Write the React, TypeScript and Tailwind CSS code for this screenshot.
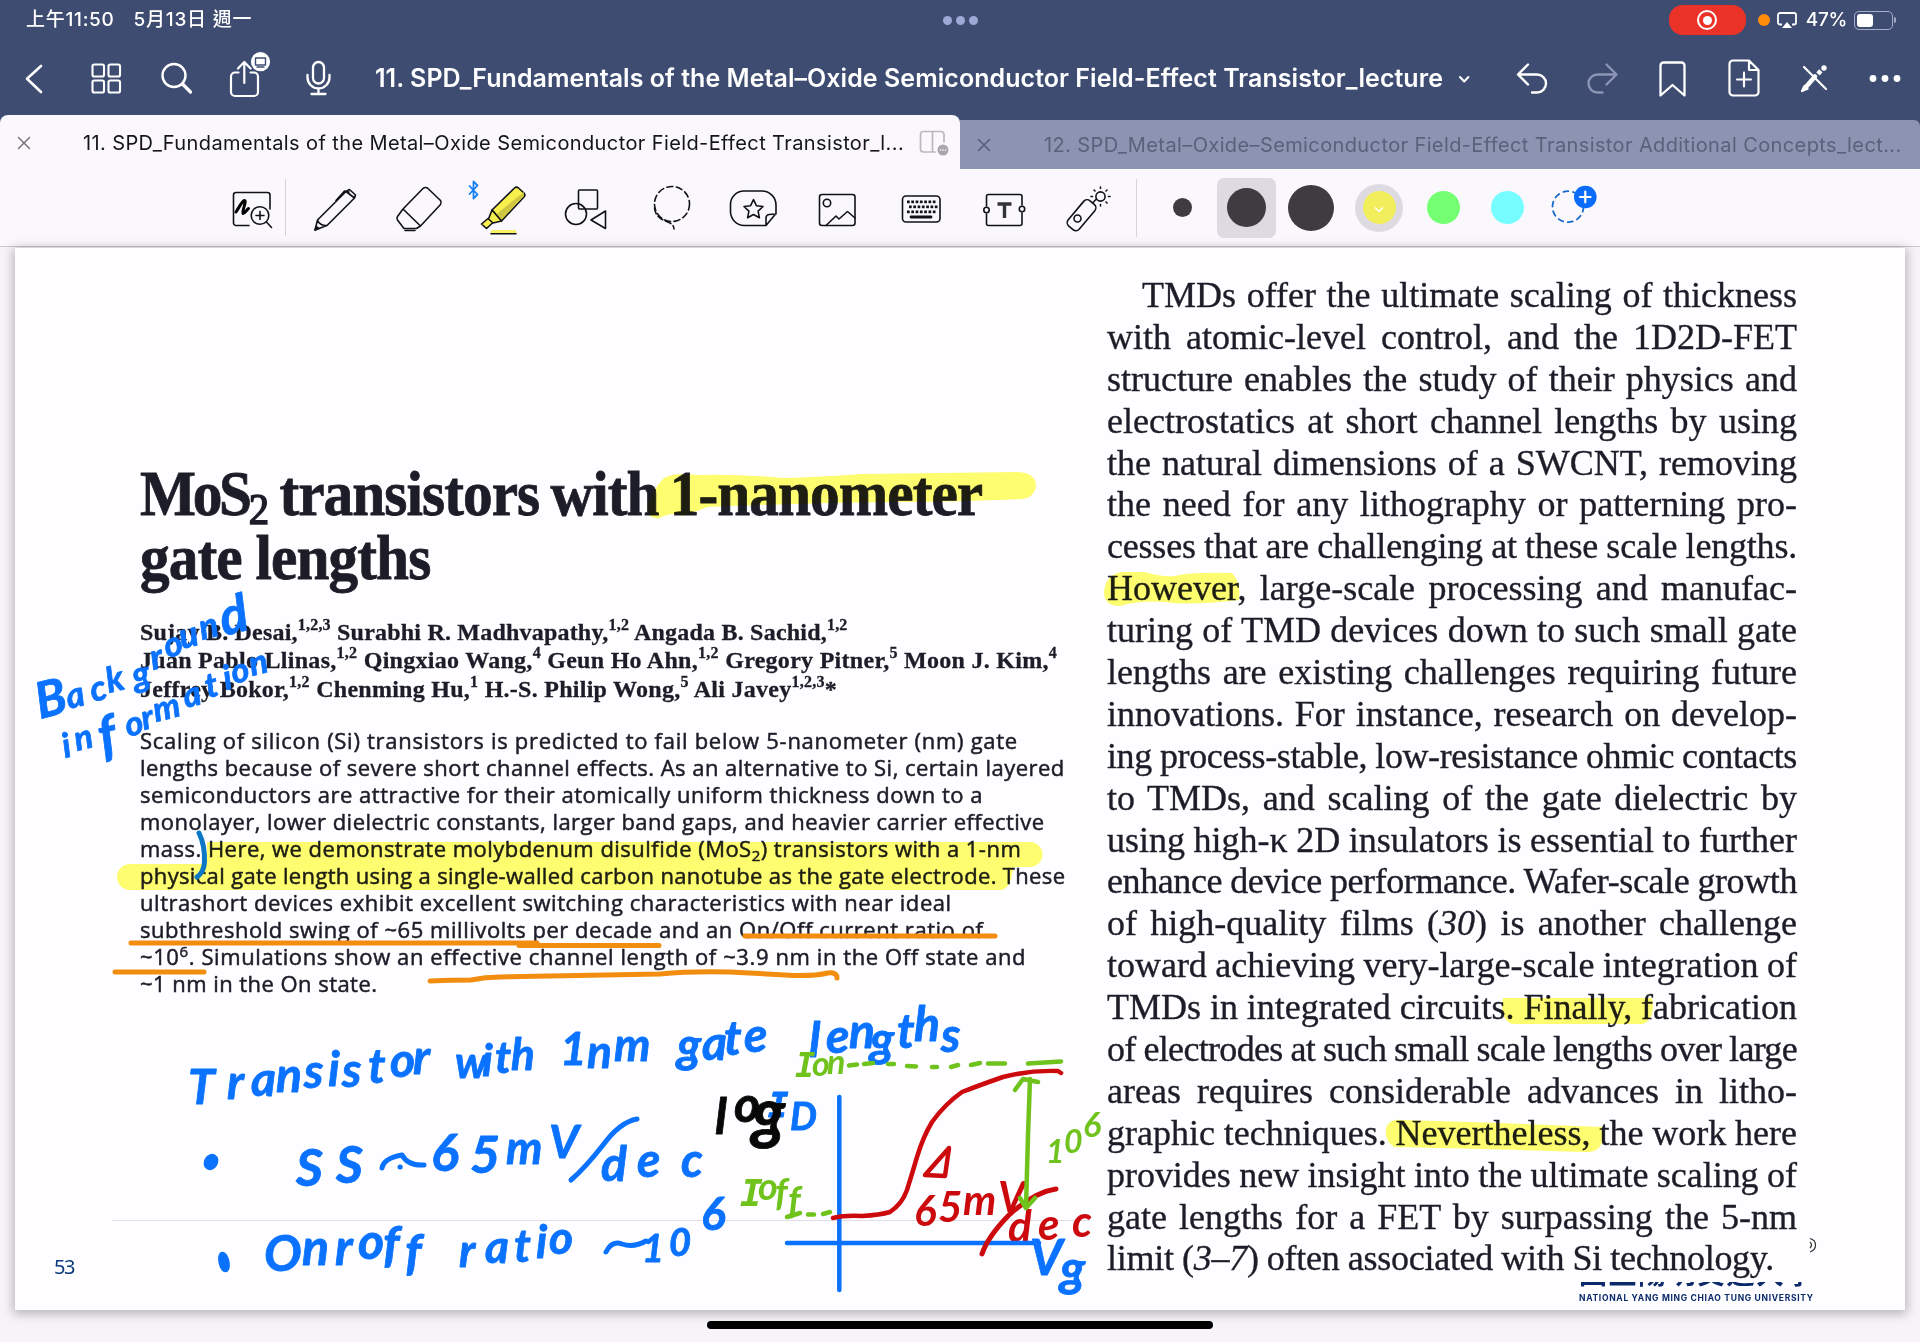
import { useLayoutEffect, useRef, useState, type ReactNode } from "react";

/** One line of text stretched to an exact width, by tracking or by horizontal scaling. */
function Fit({ w, scale = false, className = "", children }: { w: number; scale?: boolean; className?: string; children: ReactNode }) {
  const ref = useRef<HTMLSpanElement>(null);
  const [style, setStyle] = useState<{ letterSpacing?: string; transform?: string }>({});
  useLayoutEffect(() => {
    const el = ref.current;
    if (!el) return;
    const natural = el.offsetWidth;
    const n = (el.textContent ?? "").length;
    if (scale) setStyle({ transform: `scaleX(${w / natural})` });
    else setStyle({ letterSpacing: `${(w - natural) / n}px` });
  }, [w, scale]);
  return (
    <span ref={ref} style={style} className={`inline-block origin-left whitespace-nowrap ${className}`}>
      {children}
    </span>
  );
}

/** Justified line: word gaps take the slack, and tracking tightens a line that is too long. */
function Justified({ w, children }: { w: number; children: ReactNode }) {
  const ref = useRef<HTMLSpanElement>(null);
  const [style, setStyle] = useState<{ letterSpacing?: string; wordSpacing?: string }>({});
  useLayoutEffect(() => {
    const el = ref.current;
    if (!el) return;
    const text = el.textContent ?? "";
    const gaps = text.split(" ").length - 1;
    const slack = w - el.getBoundingClientRect().width;
    const word = Math.max(slack / gaps, -0.5);
    setStyle({ wordSpacing: `${word}px`, letterSpacing: `${(slack - word * gaps) / text.length}px` });
  }, [w]);
  return (
    <span ref={ref} style={style} className="inline-block whitespace-nowrap">
      {children}
    </span>
  );
}

/** Icon cell; its drawing uses window coordinates around the centre cx, cy. */
function Cell({ cx, cy, w, h, stroke = "#111118", sw = 1.6, children }: { cx: number; cy: number; w: number; h: number; stroke?: string; sw?: number; children: ReactNode }) {
  return (
    <svg className="block shrink-0" width={w} height={h} viewBox={`${cx - w / 2} ${cy - h / 2} ${w} ${h}`} fill="none" stroke={stroke} strokeWidth={sw} strokeLinecap="round" strokeLinejoin="round">
      {children}
    </svg>
  );
}

const W = "#ffffff";

function StatusBar() {
  return (
    <div className="grid h-[40px] grid-cols-3 items-center text-[19px] font-medium text-white">
      <div className="flex gap-[19px] pl-[26px]">
        <Fit w={89}>上午11:50</Fit>
        <Fit w={119}>5月13日 週一</Fit>
      </div>
      <div className="flex justify-center gap-[4px]">
        <i className="size-[9px] rounded-full bg-[#9fa9d6]" />
        <i className="size-[9px] rounded-full bg-[#9fa9d6]" />
        <i className="size-[9px] rounded-full bg-[#9fa9d6]" />
      </div>
      <div className="flex items-center justify-end pr-[24px]">
        <div className="flex h-[30px] w-[77px] items-center justify-center rounded-[14px] bg-[#ea3228]">
          <span className="flex size-[20px] items-center justify-center rounded-full border-2 border-white">
            <i className="size-[9px] rounded-full bg-white" />
          </span>
        </div>
        <i className="ml-[12px] size-[12px] rounded-full bg-[#ff8c0a]" />
        <svg className="ml-[7px]" width="20" height="17" viewBox="0 0 20 17" fill="none" stroke="white" strokeWidth="1.8">
          <path d="M5 12.500H3a2 2 0 0 1-2-2V3a2 2 0 0 1 2-2h14a2 2 0 0 1 2 2v7.500a2 2 0 0 1-2 2h-2" />
          <path d="M10 10l5 6H5z" fill="white" stroke="none" />
        </svg>
        <span className="ml-[9px]">
          <Fit w={41}>47%</Fit>
        </span>
        <div className="ml-[7px] flex h-[19px] w-[39px] items-center rounded-[5px] border-[1.500px] border-[#a5adca] pl-[1.500px]">
          <i className="h-[13px] w-[16px] rounded-[3px] bg-white" />
        </div>
        <i className="ml-[1px] h-[6px] w-[2px] rounded-r bg-[#a5adca]" />
      </div>
    </div>
  );
}

function NavBar() {
  return (
    <div className="flex h-[75px] items-center">
      <Cell cx={35} cy={77} w={70} h={60} stroke={W} sw={2.6}>
        <path d="M41 65L27 77.700L41 91" />
      </Cell>
      <Cell cx={105} cy={77} w={70} h={60} stroke={W} sw={2.1}>
        <rect x="92.500" y="63.500" width="11.500" height="12" rx="1.800" />
        <rect x="108.500" y="63.500" width="11.500" height="12" rx="1.800" />
        <rect x="92.500" y="79.500" width="11.500" height="12" rx="1.800" />
        <rect x="108.500" y="79.500" width="11.500" height="12" rx="1.800" />
      </Cell>
      <Cell cx={175} cy={77} w={70} h={60} stroke={W} sw={2.4}>
        <circle cx="174" cy="74.500" r="11.500" />
        <path d="M182.500 83L190.500 91" strokeWidth="3.200" />
      </Cell>
      <Cell cx={247} cy={77} w={74} h={60} stroke={W} sw={2.2}>
        <path d="M238.500 71.500H235a4 4 0 0 0-4 4V91a4 4 0 0 0 4 4h19a4 4 0 0 0 4-4V75.500a4 4 0 0 0-4-4h-3.500M244.300 82V61.500M238 67.500l6.300-6.500 6.300 6.500" />
        <circle cx="260.500" cy="60.700" r="9.600" fill={W} stroke="none" />
        <path d="M255.500 57h10v7h-10zM257 66h7" stroke="#3f4c72" strokeWidth="1.400" />
      </Cell>
      <Cell cx={318.500} cy={77} w={69} h={60} stroke={W} sw={2.3}>
        <rect x="313" y="61" width="11" height="21.500" rx="5.500" />
        <path d="M307.500 74v2.500a11 11 0 0 0 22 0V74M318.500 87.500v5M311.500 93h14" />
      </Cell>
      <h1 className="ml-[22px] w-[1068px] text-[25px] leading-[30px] font-semibold text-white">
        <Fit w={1068}>11. SPD_Fundamentals of the Metal–Oxide Semiconductor Field-Effect Transistor_lecture</Fit>
      </h1>
      <Cell cx={1464} cy={77} w={42} h={60} stroke={W} sw={2}>
        <path d="M1460 76l4.200 4.500 4.200-4.500" />
      </Cell>
      <span className="w-[12px]" />
      <Cell cx={1532} cy={77} w={70} h={60} stroke={W} sw={2.4}>
        <path d="M1528 63.500L1518 73.500l10 10M1518.500 73.500h18.500a9 9 0 0 1 0 18h-5" />
      </Cell>
      <Cell cx={1602} cy={77} w={70} h={60} stroke="#8c94b4" sw={2.4}>
        <path d="M1606.500 63.500l10 10-10 10M1616 73.500h-18.500a9 9 0 0 0 0 18h5" />
      </Cell>
      <Cell cx={1672} cy={77} w={70} h={60} stroke={W} sw={2.3}>
        <path d="M1660.500 94.500V64.500a3 3 0 0 1 3-3h18a3 3 0 0 1 3 3v30l-12-10.500z" />
      </Cell>
      <Cell cx={1743} cy={77} w={72} h={60} stroke={W} sw={2.200}>
        <path d="M1749 59.500h-16a3.500 3.500 0 0 0-3.500 3.500v28a3.500 3.500 0 0 0 3.500 3.500h22a3.500 3.500 0 0 0 3.500-3.500V69zM1749 59.500V69h9.500M1744 71.500v14M1737 78.500h14" />
      </Cell>
      <Cell cx={1814} cy={77} w={70} h={60} stroke={W} sw={2.2}>
        <path d="M1804 66l22 22" />
        <path d="M1805.500 86.500L1815 75.500" strokeWidth="4.500" />
        <path d="M1802 90l2.500-5 3 2.800z" fill={W} />
        <path d="M1818 73l2.800-3.200" strokeWidth="4.500" strokeLinecap="butt" />
        <circle cx="1824" cy="67" r="1.600" fill={W} />
      </Cell>
      <Cell cx={1884.500} cy={77} w={71} h={60} stroke="none">
        <circle cx="1873" cy="77.500" r="3.400" fill={W} />
        <circle cx="1885" cy="77.500" r="3.400" fill={W} />
        <circle cx="1897" cy="77.500" r="3.400" fill={W} />
      </Cell>
    </div>
  );
}

function Tabs() {
  return (
    <div className="flex h-[54px] items-end text-[20px]">
      <div className="flex h-[54px] w-[960px] items-center rounded-t-[8px] bg-[#faf8fd] pt-[2px] text-[#151518]">
        <Cell cx={24} cy={144} w={48} h={40} stroke="#77757c" sw={1.500}>
          <path d="M18.500 138.500l11 11M29.500 138.500l-11 11" />
        </Cell>
        <span className="ml-[35px] w-[831px]">
          <Fit w={821}>11. SPD_Fundamentals of the Metal–Oxide Semiconductor Field-Effect Transistor_l...</Fit>
        </span>
        <Cell cx={934} cy={143} w={40} h={40} stroke="#bab8be" sw={1.700}>
          <path d="M935 152h-11.500a3 3 0 0 1-3-3V134.500a3 3 0 0 1 3-3H941a3 3 0 0 1 3 3V142M932.500 131.500V152" />
          <circle cx="943" cy="150" r="5.500" fill="#a9a7ad" stroke="none" />
          <path d="M940.500 150h.1M943 150h.1M945.500 150h.1" stroke="white" strokeWidth="1.500" />
        </Cell>
      </div>
      <div className="flex h-[49px] w-[960px] items-center rounded-tr-[6px] bg-[#8d94b2] text-[#5b617c]">
        <Cell cx={984} cy={145} w={48} h={40} stroke="#555b76" sw={1.500}>
          <path d="M978.500 139.500l11 11M989.500 139.500l-11 11" />
        </Cell>
        <span className="ml-[36px]">
          <Fit w={858}>12. SPD_Metal–Oxide–Semiconductor Field-Effect Transistor Additional Concepts_lect...</Fit>
        </span>
      </div>
    </div>
  );
}

const keys = [0, 1, 2].flatMap((r) => [0, 1, 2, 3, 4, 5, 6].map((c) => [907 + c * 4.3 - (r === 1 ? -2 : 0), 200.500 + r * 5]));

function ToolBar() {
  return (
    <div className="flex h-[78px] items-center border-b-[1.500px] border-[#c9c7cd] bg-[#faf8fd] pl-[221px]">
      <Cell cx={253} cy={208} w={64} h={76}>
        <path d="M249 225.500H236a2.500 2.500 0 0 1-2.500-2.500V195a2.500 2.500 0 0 1 2.500-2.500h31.500a2.500 2.500 0 0 1 2.500 2.500v14" />
        <path d="M236 212c4-6 6-11 8.500-11.500c2.500 0-3 12-1.500 13c1.500 .5 3-3 5.500-5" stroke="#000" strokeWidth="3" />
        <circle cx="260" cy="215.500" r="8.800" />
        <path d="M256 215.500h8M260 211.500v8M266.500 222l5 5.500" />
      </Cell>
      <i className="h-[57px] w-px bg-[#d5d3d9]" />
      <Cell cx={335} cy={208} w={98} h={76}>
        <path d="M315 230l2.500-10L346 191.500l8.500 6.500-27.500 27.500zM317.500 220c1 3.500 5 6 9.500 5.500M346 191.500l3.500-2 6 5.500-1 3M336 200.500l8.500-9.500 4.500 1" />
        <path d="M315 230l4-1.500-2.500-2z" fill="#111118" />
      </Cell>
      <Cell cx={419} cy={208} w={70} h={76}>
        <path d="M403 209l20-20.500a3.500 3.500 0 0 1 5 0l12.500 12a3.500 3.500 0 0 1 0 4L420.500 226zM403 209l-5.500 7.500a3 3 0 0 0 0 3.500l6.500 8.500h12.500l4-2.500M405 230.500h10" />
      </Cell>
      <Cell cx={498} cy={208} w={88} h={76}>
        <path d="M469.500 186l8 8.500-4 4V181.500l4 4-8 8.500" stroke="#1580f5" strokeWidth="1.800" />
        <path d="M492 210l22.500-22a3 3 0 0 1 4 0l5.500 5a3 3 0 0 1 0 4L501.500 221z" fill="#f7ef4e" />
        <path d="M501 219.500l-5-5L524 192v4z" fill="#cfc641" stroke="none" />
        <path d="M492 210l-3.500 9 4.500 4 8.500-2zM488 218.500l-6.500 5.500 5 4.500 6-5.500" fill="#f7ef4e" />
        <path d="M491 231.500h25" stroke="#f7f067" strokeWidth="3" strokeLinecap="butt" />
        <path d="M491 233.700h25" />
      </Cell>
      <Cell cx={586} cy={208} w={88} h={76}>
        <rect x="578.500" y="190" width="19" height="19" rx="1" />
        <circle cx="576" cy="214" r="10.500" />
        <path d="M605.500 211v17.500L591 220z" />
      </Cell>
      <Cell cx={668} cy={208} w={80} h={76}>
        <circle cx="670" cy="204" r="17.500" strokeDasharray="6 3.600" />
        <path d="M652.500 208c1 8 6 11 11 13s8 3 8.500 8" strokeDasharray="6 3" />
      </Cell>
      <Cell cx={753} cy={208} w={86} h={76}>
        <path d="M766 225.500H744a14 14 0 0 1-13.500-14v-7a13.500 13.500 0 0 1 13.500-13.500h18a14 14 0 0 1 14 14v8.500zM766 225.500v-7.500q0-3 3-3.500l7-.5" />
        <path d="M753.500 199.500l2.900 6.200 6.600.8-4.900 4.600 1.300 6.700-5.900-3.300-5.900 3.300 1.300-6.700-4.900-4.600 6.600-.8z" />
      </Cell>
      <Cell cx={837} cy={208} w={82} h={76}>
        <rect x="819.500" y="194.500" width="35.500" height="31" rx="2.500" />
        <circle cx="827" cy="203" r="3.700" />
        <path d="M826 225.500l10-9.500 3 3 8.500-7.500 7.500 6.500" />
      </Cell>
      <Cell cx={921} cy={208} w={86} h={76}>
        <rect x="902.500" y="196" width="37.500" height="26" rx="3.500" />
        {keys.map(([x, y]) => (
          <rect key={`${x}-${y}`} x={x} y={y} width="2.700" height="2.700" fill="#111118" stroke="none" />
        ))}
        <path d="M911 217h20" strokeWidth="2.800" />
      </Cell>
      <Cell cx={1004} cy={208} w={80} h={76}>
        <path d="M986.500 206v-9.500a2 2 0 0 1 2-2h31.500a2 2 0 0 1 2 2V205M1022 213v10.500a2 2 0 0 1-2 2h-31.500a2 2 0 0 1-2-2V214" />
        <circle cx="986.500" cy="210" r="2.700" />
        <circle cx="1022" cy="209" r="2.700" />
        <path d="M997.500 204h14M1004.500 204v14" stroke="#333" strokeWidth="3.400" strokeLinecap="butt" />
      </Cell>
      <Cell cx={1089} cy={208} w={88} h={76}>
        <rect x="1066" y="208" width="33" height="14.500" rx="4.500" transform="rotate(-50 1082.500 215.200)" />
        <circle cx="1078.500" cy="218.500" r="3.500" />
        <path d="M1093.500 203l4-4" />
        <circle cx="1101.500" cy="196.500" r="4.600" />
        <path d="M1101.500 187v1.500M1101.500 204.500v1.500M1092 196.500h1.500M1109.500 196.500h1.500M1095 190l1 1M1107 202l1 1M1108 190l-1 1" />
      </Cell>
      <i className="ml-[4px] h-[58px] w-px bg-[#d5d3d9]" />
      <i className="ml-[36px] size-[19px] rounded-full bg-[#3e3c40]" />
      <span className="ml-[25px] flex h-[60px] w-[59px] items-center justify-center rounded-[7px] bg-[#dddbe1]">
        <i className="size-[39px] rounded-full bg-[#3e3c40]" />
      </span>
      <i className="ml-[12px] size-[46px] rounded-full bg-[#3e3c40]" />
      <span className="ml-[21px] flex size-[48px] items-center justify-center rounded-full bg-[#dddbe1]">
        <span className="flex size-[33px] items-center justify-center rounded-full bg-[#f1ee5c]">
          <svg width="10" height="8" viewBox="0 0 10 8" fill="none" stroke="white" strokeWidth="1.500" className="mt-1">
            <path d="M1 1.500l4 4 4-4" />
          </svg>
        </span>
      </span>
      <i className="ml-[24px] size-[33px] rounded-full bg-[#75ff73]" />
      <i className="ml-[31px] size-[33px] rounded-full bg-[#76fdff]" />
      <Cell cx={1568} cy={208} w={88} h={76} stroke="#1569c9" sw={1.800}>
        <circle cx="1568" cy="206.700" r="15.500" strokeDasharray="5 4.700" />
        <circle cx="1585.300" cy="197" r="11.300" fill="#0a6cfa" stroke="none" />
        <path d="M1580 197h10.600M1585.300 191.700v10.600" stroke="white" strokeWidth="2.200" />
      </Cell>
    </div>
  );
}

const authors: [number, ReactNode][] = [
  [708, <>Sujay B. Desai,<sup>1,2,3</sup> Surabhi R. Madhvapathy,<sup>1,2</sup> Angada B. Sachid,<sup>1,2</sup></>],
  [917, <>Juan Pablo Llinas,<sup>1,2</sup> Qingxiao Wang,<sup>4</sup> Geun Ho Ahn,<sup>1,2</sup> Gregory Pitner,<sup>5</sup> Moon J. Kim,<sup>4</sup></>],
  [697, <>Jeffrey Bokor,<sup>1,2</sup> Chenming Hu,<sup>1</sup> H.-S. Philip Wong,<sup>5</sup> Ali Javey<sup>1,2,3</sup>*</>],
];

const abstract: [number, ReactNode][] = [
  [878, "Scaling of silicon (Si) transistors is predicted to fail below 5-nanometer (nm) gate"],
  [925, "lengths because of severe short channel effects. As an alternative to Si, certain layered"],
  [843, "semiconductors are attractive for their atomically uniform thickness down to a"],
  [905, "monolayer, lower dielectric constants, larger band gaps, and heavier carrier effective"],
  [881, <>mass. Here, we demonstrate molybdenum disulfide (MoS<sub>2</sub>) transistors with a 1-nm</>],
  [925, "physical gate length using a single-walled carbon nanotube as the gate electrode. These"],
  [812, "ultrashort devices exhibit excellent switching characteristics with near ideal"],
  [843, "subthreshold swing of ~65 millivolts per decade and an On/Off current ratio of"],
  [886, <>~10<sup>6</sup>. Simulations show an effective channel length of ~3.9 nm in the Off state and</>],
  [237, "~1 nm in the On state."],
];

const column: ReactNode[] = [
  "TMDs offer the ultimate scaling of thickness",
  "with atomic-level control, and the 1D2D-FET",
  "structure enables the study of their physics and",
  "electrostatics at short channel lengths by using",
  "the natural dimensions of a SWCNT, removing",
  "the need for any lithography or patterning pro-",
  "cesses that are challenging at these scale lengths.",
  "However, large-scale processing and manufac-",
  "turing of TMD devices down to such small gate",
  "lengths are existing challenges requiring future",
  "innovations. For instance, research on develop-",
  "ing process-stable, low-resistance ohmic contacts",
  "to TMDs, and scaling of the gate dielectric by",
  "using high-κ 2D insulators is essential to further",
  "enhance device performance. Wafer-scale growth",
  <>of high-quality films (<em>30</em>) is another challenge</>,
  "toward achieving very-large-scale integration of",
  "TMDs in integrated circuits. Finally, fabrication",
  "of electrodes at such small scale lengths over large",
  "areas requires considerable advances in litho-",
  "graphic techniques. Nevertheless, the work here",
  "provides new insight into the ultimate scaling of",
  "gate lengths for a FET by surpassing the 5-nm",
  <>limit (<em>3–7</em>) often associated with Si technology.</>,
];

/** Handwritten word: every letter has its own pen position. */
function Pen({ t, x, y, size = 46 }: { t: string; x: string; y: string; size?: number }) {
  return (
    <text x={x} y={y} fontSize={size}>
      {t}
    </text>
  );
}

function Highlights() {
  return (
    <svg className="pointer-events-none absolute inset-0 mix-blend-multiply" width="1890" height="1062" viewBox="15 248 1890 1062" fill="#ffff70">
      <path d="M647 507Q652 490 664 478Q675 472 697 475Q740 474 783 478Q820 477 861 474L1018 472Q1036 473 1036 486Q1034 498 1022 499Q940 502 897 502Q800 503 708 507Q694 512 683 516Q672 511 660 518Q648 520 647 507Z" />
      <path d="M207 842H1030a12.500 12.500 0 0 1 0 25H207z" />
      <path d="M130 864H1012q4 1 0 10q-2 14-10 16H130a13 13 0 0 1 0-26z" />
      <path d="M1104 592Q1106 574 1122 572H1145Q1160 577 1175 576Q1190 572 1232 573Q1241 582 1239 600Q1190 606 1165 602Q1140 600 1120 606Q1104 606 1104 592Z" />
      <path d="M1503 998H1652q4 20-9 26H1512q-13-6-9-26z" />
      <path d="M1386 1136Q1384 1118 1402 1120L1470 1122L1602 1127Q1606 1150 1590 1152Q1520 1150 1400 1147Q1390 1149 1386 1136Z" />
    </svg>
  );
}

function Ink() {
  return (
    <svg className="pointer-events-none absolute inset-0 font-['Lato'] font-bold italic" width="1890" height="1062" viewBox="15 248 1890 1062" fill="none" strokeWidth="5" strokeLinecap="round" strokeLinejoin="round">
      <g stroke="#f28d10" strokeWidth="5">
        <path d="M131 943H537M519 945.500H659M745 936H995M115 972H204" />
        <path d="M430 981Q455 980 471 980Q485 977 500 977L660 974Q690 971 730 972Q765 974 794 975.500Q815 976 828 973Q837 972 837 978" />
      </g>
      <path d="M199 833Q205 845 204.500 862Q204 872 197 877" stroke="#0a78c4" />

      <g fill="#0a72ff" stroke="#0a72ff" strokeWidth="0.800">
        <text fontSize="35" rotate="-14">
          <tspan x="40" y="719" fontSize="50">B</tspan>
          <tspan x="69 93 109 135 153 167 182 202" y="709 702 693 688 670 658 649 640">ackgroun</tspan>
          <tspan x="224" y="636" fontSize="52">d</tspan>
        </text>
        <text fontSize="34" rotate="-14">
          <tspan x="65 77" y="758 751">in</tspan>
          <tspan x="103" y="756" fontSize="54">f</tspan>
          <tspan x="128 144 156 186 208 226 234 252" y="737 730 722 708 698 690 684 676">ormation</tspan>
        </text>
        <Pen t="Transistor" x="188 227 251 276 304 328 342 368 390 413" y="1104 1099 1096 1092 1088 1086 1087 1083 1077 1074" size={48} />
        <Pen t="with" x="455 482 495 511" y="1078 1076 1073 1070" size={44} />
        <Pen t="1nm" x="560 587 614" y="1065 1068 1061" />
        <Pen t="gate" x="677 702 724 744" y="1062 1060 1055 1052" size={48} />
        <Pen t="lengths" x="809 826 849 870 897 914 941" y="1057 1053 1048 1056 1048 1041 1052" size={48} />
        <Pen t="SS" x="296 336" y="1186 1183" size={52} />
        <Pen t="65" x="431 470" y="1171 1173" size={52} />
        <Pen t="mV" x="506 549" y="1164 1158" />
        <Pen t="dec" x="601 637 681" y="1181 1177 1177" size={48} />
        <Pen t="Onroff" x="264 302 335 358 383 405" y="1271 1265 1265 1259 1262 1270" size={50} />
        <Pen t="ratio" x="459 485 514 536 549" y="1267 1263 1262 1258 1254" />
        <Pen t="10" x="642 669" y="1262 1256" size={38} />
        <Pen t="6" x="701" y="1230" size={46} />
        <text fontSize="34">
          <tspan x="768" y="1117" className="font-['DejaVu_Sans_Mono']">I</tspan>
          <tspan x="790" y="1130" fontSize="38">D</tspan>
        </text>
        <Pen t="Vg" x="1030 1060" y="1275 1286" size={50} />
      </g>
      <g fill="#080808" stroke="#080808" strokeWidth="0.800">
        <text fontSize="50">
          <tspan x="715 734" y="1134 1122">lo</tspan>
          <tspan x="752" y="1136" fontSize="66">g</tspan>
        </text>
      </g>
      <g fill="#70c21c">
        <text fontSize="34">
          <tspan x="795" y="1077" className="font-['DejaVu_Sans_Mono']">I</tspan>
          <tspan x="812 827" y="1076 1074">on</tspan>
        </text>
        <text fontSize="38">
          <tspan x="740" y="1206" className="font-['DejaVu_Sans_Mono']">I</tspan>
          <tspan x="758 775 788" y="1200 1206 1214">off</tspan>
        </text>
        <Pen t="10" x="1046 1064" y="1163 1153" size={32} />
        <Pen t="6" x="1083" y="1137" size={34} />
      </g>
      <g fill="#cc0a0e">
        <Pen t="65mV" x="914 938 963 998" y="1226 1222 1215 1212" size={42} />
        <Pen t="dec" x="1008 1038 1072" y="1242 1240 1237" size={44} />
      </g>

      <g stroke="#0a72ff">
        <ellipse cx="211" cy="1162" rx="4.500" ry="6" fill="#0a72ff" transform="rotate(30 211 1162)" />
        <ellipse cx="224" cy="1262" rx="3" ry="8" fill="#0a72ff" transform="rotate(-12 224 1262)" />
        <path d="M382 1168Q384 1158 402 1155Q408 1166 424 1165M400 1167h.2" />
        <path d="M571 1180Q585 1168 603 1145Q620 1122 637 1119" />
        <path d="M606 1252Q612 1240 622 1244Q634 1248 646 1241" />
        <path d="M839.300 1097V1290" strokeWidth="4.500" />
        <path d="M787 1243H1039" strokeWidth="4.500" />
      </g>
      <g stroke="#cc0a0e">
        <path d="M833 1218Q845 1215 862 1216Q880 1215 890 1212Q902 1204 907 1190Q912 1174 917 1157Q923 1137 932 1122Q945 1104 962 1092Q980 1085 1003 1077Q1030 1070 1058 1071L1061 1073" strokeWidth="4.500" />
        <path d="M949 1148L925 1175L945 1176Z" strokeWidth="4.500" />
        <path d="M982 1254Q988 1236 1010 1214Q1035 1192 1056 1189" />
      </g>
      <g stroke="#70c21c" strokeWidth="4.500">
        <path d="M849 1065.500l8-1M864 1064l9-1M888 1064h6M907 1066l9 .5M932 1067h5M951 1067l7-2M971 1065l9-2M988 1063.500h17M1028 1063.500l33-2" />
        <path d="M787 1217l13-4M808 1214.500h6M823 1214l7-2" />
        <path d="M1030 1079L1028 1135L1026 1208M1015 1090L1023 1079L1038 1082M1020 1198L1026 1208L1035 1198" />
      </g>
    </svg>
  );
}

function Slide() {
  return (
    <article className="relative mx-auto mr-[15px] ml-[15px] flex h-[1062px] bg-[#fefdff] text-[#1d1d29] shadow-[0_2px_10px_2px_rgba(0,0,0,0.26)]">
      <section className="w-[1061px] pt-[214px] pl-[125px]">
        <h2 className="font-['Liberation_Serif'] text-[64px] leading-[64px] font-bold tracking-[-1px] [-webkit-text-stroke:0.8px_#1d1d29]">
          <div className="h-[64px]">
            <Fit w={842} scale className="[word-spacing:-3px]">
              <span className="tracking-[-3.500px]">MoS</span>
              <span className="inline-block translate-y-[9px] text-[44px] leading-none font-normal [-webkit-text-stroke:1.5px_#1d1d29]">2</span> transistors with 1-nanometer
            </Fit>
          </div>
          <div className="h-[64px]">
            <Fit w={290} scale>gate lengths</Fit>
          </div>
        </h2>
        <div className="mt-[28px] font-['Liberation_Serif'] text-[24px] leading-[28.300px] font-bold [-webkit-text-stroke:0.3px_#1d1d29] [&_sup]:-top-[10px] [&_sup]:text-[16px] [&_sup]:leading-none">
          {authors.map(([w, t], i) => (
            <div key={i} className="h-[28.300px]">
              <Fit w={w}>{t}</Fit>
            </div>
          ))}
        </div>
        <div className="mt-[24px] font-['Open_Sans'] text-[22px] leading-[27px] font-medium [-webkit-text-stroke:0.5px_#1d1d29] [&_sub]:text-[15px] [&_sub]:leading-none [&_sup]:-top-[8px] [&_sup]:text-[15px] [&_sup]:leading-none">
          {abstract.map(([w, t], i) => (
            <div key={i} className="h-[27px]">
              <Fit w={w}>{t}</Fit>
            </div>
          ))}
        </div>
        <hr className="mt-[223px] -ml-[28px] w-[978px] border-[#e3dde6]" />
        <div className="mt-[34px] -ml-[86px] font-['Noto_Sans'] text-[20px] leading-[24px] text-[#0d3a7d]">
          <Fit w={20}>53</Fit>
        </div>
      </section>
      <section className="ml-[31px] w-[690px] pt-[27px] font-['Liberation_Serif'] text-[36px] leading-[41.900px] tracking-[0px] [-webkit-text-stroke:0.35px_#1d1d29]">
        {column.map((t, i) => (
          <p key={i} className={i === 0 ? "h-[41.900px] pl-[35px]" : "h-[41.900px]"}>
            <Justified w={i === 0 ? 655 : i === 23 ? 667 : 690}>{t}</Justified>
          </p>
        ))}
        <div className="relative mt-[2px] ml-[472px] h-[6px] w-[236px] overflow-hidden text-[#0c2a6b] [-webkit-text-stroke:0px]">
          <span className="absolute bottom-0 left-0 font-['Noto_Sans_CJK_TC'] text-[28px] leading-[32px] font-bold tracking-[1.500px] whitespace-nowrap">國立陽明交通大學</span>
        </div>
        <div className="mt-[3px] ml-[472px] font-['Inter'] text-[8.500px] leading-[14px] font-bold text-[#0c2a6b] [-webkit-text-stroke:0px]">
          <Fit w={235}>NATIONAL YANG MING CHIAO TUNG UNIVERSITY</Fit>
        </div>
      </section>
      <Highlights />
      <Ink />
      <svg className="pointer-events-none absolute top-[987px] left-[1794px]" width="8" height="24" viewBox="0 0 8 24" fill="none" stroke="#333" strokeWidth="1.200">
        <path d="M1 3.500Q6.500 5 6.500 10T1 17M1 7q3 3 0 6" />
      </svg>
    </article>
  );
}

export default function App() {
  return (
    <div className="flex h-[1342px] w-[1920px] flex-col overflow-hidden bg-[#f6f4f9] font-['Inter','Noto_Sans_CJK_TC',sans-serif]">
      <header className="bg-[#3f4c72]">
        <StatusBar />
        <NavBar />
        <Tabs />
      </header>
      <ToolBar />
      <main className="flex flex-1 flex-col pt-px">
        <Slide />
        <div className="mx-auto mt-[11px] h-[8px] w-[506px] rounded-full bg-black" />
      </main>
    </div>
  );
}
